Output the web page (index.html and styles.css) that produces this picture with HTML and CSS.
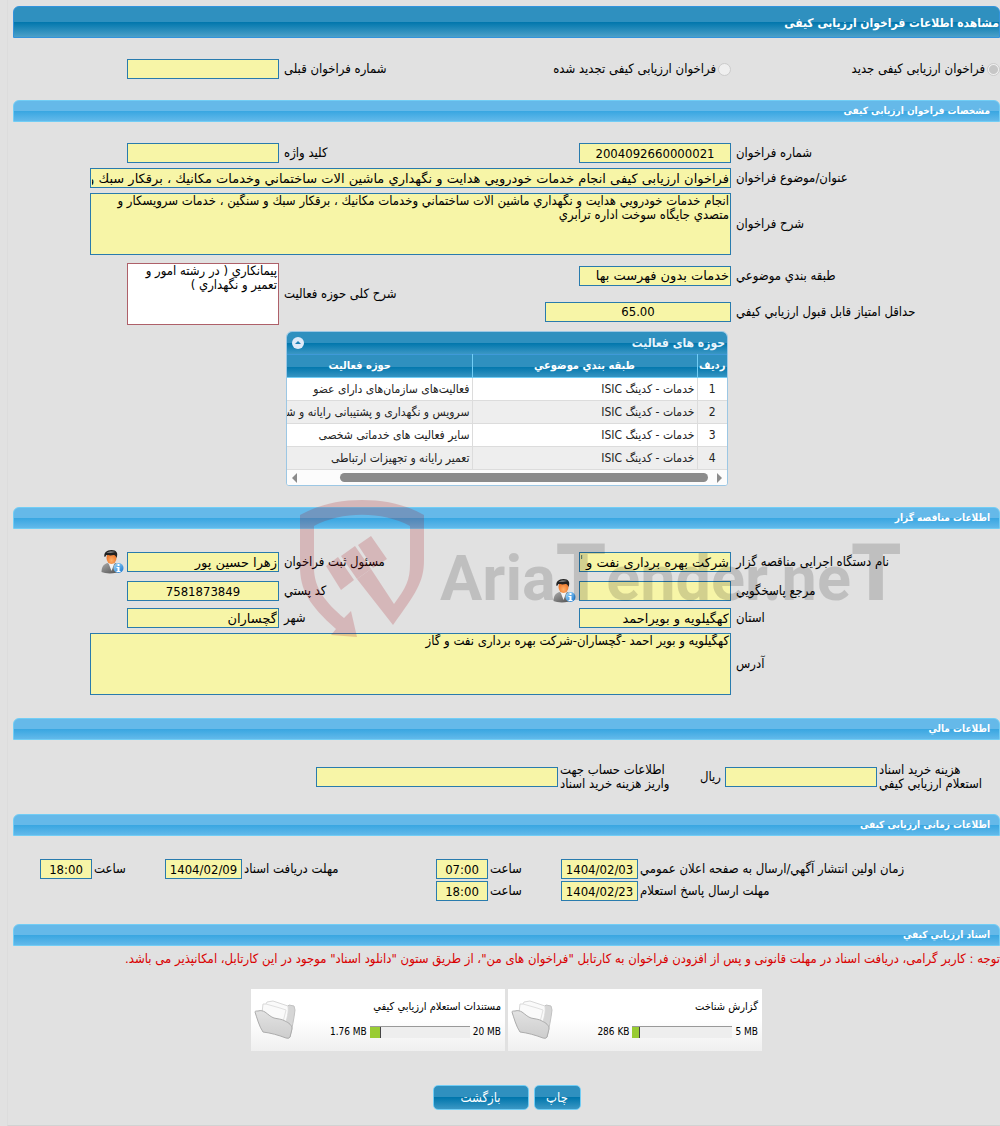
FILE: index.html
```html
<!DOCTYPE html>
<html lang="fa" dir="rtl">
<head>
<meta charset="utf-8">
<title>مشاهده اطلاعات فراخوان ارزیابی کیفی</title>
<link rel="stylesheet" href="styles.css">
</head>
<body>
<svg class="defs" width="0" height="0" aria-hidden="true">
  <defs>
    <linearGradient id="suit" x1="0" y1="0" x2="1" y2="1"><stop offset="0" stop-color="#aaa"/><stop offset="1" stop-color="#4a4a4a"/></linearGradient>
    <radialGradient id="face" cx=".5" cy=".7" r=".7"><stop offset="0" stop-color="#ffb067"/><stop offset="1" stop-color="#e8681c"/></radialGradient>
    <linearGradient id="badge" x1="0" y1="0" x2="1" y2="1"><stop offset="0" stop-color="#a5dcfb"/><stop offset="1" stop-color="#1273cf"/></linearGradient>
    <linearGradient id="flap" x1="0" y1="0" x2="0" y2="1"><stop offset="0" stop-color="#e2e2e2"/><stop offset="1" stop-color="#cdcdcd"/></linearGradient>
    <symbol id="person" viewBox="0 0 22 24">
      <path d="M0 22c0-5 2-8 6-9l4 2 4-2c3 1 5 4 5 8-4 3-15 3-19 1z" fill="url(#suit)"/>
      <path d="M7 13l3 8 3-8-3 1z" fill="#f4f4f4"/>
      <ellipse cx="10" cy="8" rx="5" ry="6" fill="url(#face)"/>
      <path d="M3 7c-1-4 2-7 7-7 5 0 7 3 5 8-1-3-2-3-3-3-3 1-6 0-7 0-1 1-1 2-2 2z" fill="#222"/>
      <path d="M5 3c2-2 6-2 9-1-3 1-6 1-9 1z" fill="#777"/>
      <circle cx="17" cy="18" r="5" fill="url(#badge)"/>
      <path d="M16 14h2v2h-2zM15 17h3v4h1v1h-4v-1h1v-3h-1z" fill="#fff"/>
    </symbol>
    <symbol id="folder" viewBox="0 0 42 40">
      <path d="M32 8l3-3 5 1 1 4c-1 9-3 18-5 27l-9-6z" fill="#d6d6d6" stroke="#c2c2c2"/>
      <path d="M8 13L9 4l3 0 1-2 6-1 15 5c1 6-1 13-3 19z" fill="#fafafa" stroke="#d8d8d8"/>
      <path d="M12 4l14 4 6 2-3 12" fill="none" stroke="#e0e0e0"/>
      <path d="M1 12c0-1 1-1 3-1 3-1 5 0 7 1 4 3 6 5 9 6 4 1 8 1 11 3 4 2 7 4 7 8l-2 8c-1 2-3 1-4 1-8-3-15-5-23-6C5 26 3 18 1 12z" fill="url(#flap)" stroke="#acacac"/>
    </symbol>
  </defs>
</svg>
<main class="page">
  <h1 class="bar bar-main">مشاهده اطلاعات فراخوان ارزیابی کیفی</h1>

  <div class="grid type-row">
    <label class="radio c-label"><input type="radio" name="kind" checked disabled>فراخوان ارزیابی کیفی جدید</label>
    <label class="radio c-renew"><input type="radio" name="kind" disabled>فراخوان ارزیابی کیفی تجدید شده</label>
    <label class="lbl c-label2" for="prev">شماره فراخوان قبلی</label>
    <input class="field c-field2" id="prev" readonly>
  </div>

  <section>
    <h2 class="bar">مشخصات فراخوان ارزیابی کیفی</h2>
    <div class="grid spec">
      <label class="lbl c-label" for="num">شماره فراخوان</label>
      <input class="field num c-field" id="num" value="2004092660000021" readonly>
      <label class="lbl c-label2" for="key">کلید واژه</label>
      <input class="field c-field2" id="key" readonly>

      <label class="lbl c-label" for="subject">عنوان/موضوع فراخوان</label>
      <input class="field c-wide" id="subject" value="فراخوان ارزیابی کیفی انجام خدمات خودرويي هدايت و نگهداري ماشين الات ساختماني وخدمات مكانيك ، برقكار سبك و سنگين ، خدمات سرويسكار و متصدي جايگاه سوخت اداره ترابري" readonly>

      <label class="lbl c-label" for="desc">شرح فراخوان</label>
      <textarea class="field area c-wide" id="desc" readonly>انجام خدمات خودرويي هدايت و نگهداري ماشين الات ساختماني وخدمات مكانيك ، برقكار سبك و سنگين ، خدمات سرويسكار و متصدي جايگاه سوخت اداره ترابري</textarea>

      <label class="lbl c-label tall" for="cat">طبقه بندي موضوعي</label>
      <input class="field c-field" id="cat" value="خدمات بدون فهرست بها" readonly>
      <label class="lbl c-label2 two-rows" for="scope">شرح کلی حوزه فعالیت</label>
      <textarea class="field area scope c-field2 two-rows" id="scope" readonly>پيمانكاري ( در رشته امور و تعمير و نگهداري )</textarea>

      <label class="lbl c-label tall" for="score">حداقل امتیاز قابل قبول ارزيابي کيفي</label>
      <input class="field num score" id="score" value="65.00" readonly>
    </div>

    <div class="activities">
      <div class="act-title"><span>حوزه های فعالیت</span>
        <button class="collapse" type="button" aria-label="بستن"><svg viewBox="0 0 12 12" width="12" height="12"><circle cx="6" cy="6" r="6" fill="#dfeaf8"/><path d="M3 7l3-3 3 3z" fill="#1c7fb3"/></svg></button>
      </div>
      <table>
        <colgroup><col class="col-idx"><col class="col-cat"><col class="col-act"></colgroup>
        <thead><tr><th>ردیف</th><th>طبقه بندي موضوعي</th><th>حوزه فعالیت</th></tr></thead>
        <tbody>
          <tr><td>1</td><td>خدمات - کدینگ ISIC</td><td>فعالیت‌های سازمان‌های دارای عضو</td></tr>
          <tr><td>2</td><td>خدمات - کدینگ ISIC</td><td>سرویس و نگهداری و پشتیبانی رایانه و شبکه</td></tr>
          <tr><td>3</td><td>خدمات - کدینگ ISIC</td><td>سایر فعالیت های خدماتی شخصی</td></tr>
          <tr><td>4</td><td>خدمات - کدینگ ISIC</td><td>تعمیر رایانه و تجهیزات ارتباطی</td></tr>
        </tbody>
      </table>
      <div class="scroll"><i class="arrow arrow-r"></i><i class="thumb"></i><i class="arrow arrow-l"></i></div>
    </div>
  </section>

  <section class="owner-section">
    <h2 class="bar">اطلاعات مناقصه گزار</h2>
    <div class="grid owner">
      <label class="lbl c-label tall-icon" for="org">نام دستگاه اجرایی مناقصه گزار</label>
      <input class="field c-field" id="org" value="شرکت بهره برداری نفت و گاز گچساران" readonly>
      <label class="lbl c-label2" for="resp">مسئول ثبت فراخوان</label>
      <input class="field c-field2" id="resp" value="زهرا حسین پور" readonly>
      <button class="person c-icon" type="button" aria-label="اطلاعات مسئول"><svg width="23" height="24"><use href="#person"/></svg></button>

      <label class="lbl c-label tall-icon" for="ref">مرجع پاسخگويي</label>
      <input class="field c-field" id="ref" readonly>
      <div class="c-label2 icon-label">
        <button class="person" type="button" aria-label="اطلاعات مرجع"><svg width="23" height="24"><use href="#person"/></svg></button>
        <label for="zip">کد پستي</label>
      </div>
      <input class="field num c-field2" id="zip" value="7581873849" readonly>

      <label class="lbl c-label" for="prov">استان</label>
      <input class="field c-field" id="prov" value="کهگیلویه و بویراحمد" readonly>
      <label class="lbl c-label2" for="city">شهر</label>
      <input class="field c-field2" id="city" value="گچساران" readonly>

      <label class="lbl c-label" for="addr">آدرس</label>
      <textarea class="field area c-wide" id="addr" readonly>کهگیلویه و بویر احمد -گچساران-شرکت بهره برداری نفت و گاز</textarea>
    </div>
    <div class="watermark" aria-hidden="true" dir="ltr">
      <svg class="shield" viewBox="300 499 126 139" width="126" height="139" fill="#a70914">
        <path d="M300 515C320 504 340 500 362 500S405 504 424 515V560C424 582 416 593 393 625L357 579 371 569 394 604C406 588 410 580 410 564V526C382 511 342 511 314 526V568C314 588 326 603 344 618L351 611 357 637 331 635 336 629C309 605 300 590 300 566Z"/>
        <path d="M341 556L355 546 371 569 357 579ZM358 545L371 536 387 559 373 568ZM326 566L338 557 354 580 341 590Z"/>
      </svg>
      <span class="brand">Aria<b>T</b>ender.ne<b>T</b></span>
    </div>
  </section>

  <section class="finance-section">
    <h2 class="bar">اطلاعات مالي</h2>
    <div class="finance">
      <label class="two-line" for="cost">هزينه خريد اسناد<br>استعلام ارزيابي کيفي</label>
      <input class="field" id="cost" readonly>
      <div class="between"><span>ریال</span><label class="two-line" for="acct">اطلاعات حساب جهت<br>واريز هزينه خريد اسناد</label></div>
      <input class="field" id="acct" readonly>
    </div>
  </section>

  <section>
    <h2 class="bar">اطلاعات زمانی ارزیابی کیفی</h2>
    <div class="times">
      <label class="lbl" for="d1">زمان اولين انتشار آگهي/ارسال به صفحه اعلان عمومي</label><input class="field num" id="d1" value="1404/02/03" readonly>
      <label class="lbl" for="h1">ساعت</label><input class="field num" id="h1" value="07:00" readonly>
      <label class="lbl" for="d2">مهلت دریافت اسناد</label><input class="field num" id="d2" value="1404/02/09" readonly>
      <label class="lbl" for="h2">ساعت</label><input class="field num" id="h2" value="18:00" readonly>
      <label class="lbl next-row" for="d3">مهلت ارسال پاسخ استعلام</label><input class="field num" id="d3" value="1404/02/23" readonly>
      <label class="lbl" for="h3">ساعت</label><input class="field num" id="h3" value="18:00" readonly>
    </div>
  </section>

  <section>
    <h2 class="bar">اسناد ارزيابي کيفي</h2>
    <p class="notice">توجه : کاربر گرامی، دریافت اسناد در مهلت قانونی و پس از افزودن فراخوان به کارتابل "فراخوان های من"، از طریق ستون "دانلود اسناد" موجود در این کارتابل، امکانپذیر می باشد.</p>
    <div class="docs">
      <article class="doc">
        <div class="doc-info"><h3>گزارش شناخت</h3>
          <div class="size"><span dir="ltr">5 MB</span><div class="meter"><i style="width:8%"></i></div><span dir="ltr">286 KB</span></div></div>
        <svg class="folder" width="42" height="40"><use href="#folder"/></svg>
      </article>
      <article class="doc">
        <div class="doc-info"><h3>مستندات استعلام ارزيابي کيفي</h3>
          <div class="size"><span dir="ltr">20 MB</span><div class="meter"><i style="width:11%"></i></div><span dir="ltr">1.76 MB</span></div></div>
        <svg class="folder" width="42" height="40"><use href="#folder"/></svg>
      </article>
    </div>
    <div class="actions">
      <button class="btn" type="button">چاپ</button>
      <button class="btn btn-back" type="button">بازگشت</button>
    </div>
  </section>
</main>
</body>
</html>
```
FILE: styles.css
```css
* { box-sizing: border-box; }
body {
  margin: 0;
  background: #e1e1e1;
  color: #000;
  font: 13px/14px "DejaVu Sans Condensed", "DejaVu Sans", Tahoma, sans-serif;
  overflow-x: hidden;
}
.defs { position: absolute; }
.page {
  margin-left: 7px;
  padding: 6px 0 15px 5px;
  border-left: 1px solid #dcdcdc;
  border-bottom: 1px solid #d2d2d2;
}
h1, h2, h3, p { margin: 0; }
input, textarea, button { font: inherit; color: inherit; margin: 0; }

.bar {
  height: 22px;
  padding: 0 9px;
  border: 1px solid #71cdf5;
  border-radius: 6px 6px 0 0;
  background: linear-gradient(#65b9e9 0 50%, #38a6e1 50%, #62b9ea);
  color: #fff;
  font-size: 10px;
  line-height: 20px;
  font-weight: bold;
}
.bar-main {
  height: 32px;
  padding: 0;
  border-color: #3293dc;
  background: linear-gradient(#2f90bf 0 50%, #0076ac 50%, #4ba0c9);
  font-size: 12px;
  line-height: 32px;
}

.grid {
  display: grid;
  grid-template-columns: minmax(0, 269fr) 152px minmax(0, 300fr) 152px 37px minmax(0, 77fr);
  row-gap: 5px;
  align-items: center;
}
.c-label { grid-column: 1; }
.c-field { grid-column: 2; }
.c-label2 { grid-column: 3; }
.c-field2 { grid-column: 4; }
.c-icon { grid-column: 5; }
.c-wide { grid-column: 2 / 6; }
.lbl { text-align: left; padding-left: 5px; }

.field {
  width: 100%;
  height: 20px;
  padding: 0 1px;
  border: 1px solid #297bad;
  border-radius: 0;
  background: #f7f5a7;
  font-family: "DejaVu Sans", Tahoma, sans-serif;
  outline: 0;
}
.num, .area { font-family: "DejaVu Sans Condensed", Tahoma, sans-serif; }
.num { direction: ltr; text-align: center; }
.area {
  display: block;
  height: 62px;
  resize: none;
  overflow: hidden;
}

.type-row { padding: 21px 0; }
.type-row > * { grid-row: 1; }
.radio { display: flex; align-items: center; gap: 2px; white-space: nowrap; }
.radio input {
  appearance: none;
  width: 13px;
  height: 13px;
  border: 1px solid #cbcbcb;
  border-radius: 50%;
  background: #efefef;
}
.radio input:checked { background: radial-gradient(circle, #c6c6c6 0 4px, #efefef 5px); }
.c-renew { grid-column: 2 / 4; }

.spec { padding-top: 21px; }
.tall { height: 31px; line-height: 31px; }
.two-rows { grid-row: 4 / 6; }
.score { grid-area: 5 / 2 / 6 / 4; width: 186px; }
.scope { background: #fff; border-color: #ae6069; }

.activities {
  width: 442px;
  margin: 4px 272px 0 0;
  border: 1px solid #9cc7e4;
  border-radius: 6px 6px 3px 3px;
  background: #fff;
  overflow: hidden;
}
.act-title, .activities thead tr { background: linear-gradient(#2f90bf 0 50%, #0076ac 50%, #3b97c4); }
.act-title {
  display: flex;
  justify-content: space-between;
  align-items: center;
  height: 22px;
  padding: 0 2px 0 5px;
  color: #e9f5fd;
  font-size: 12px;
  font-weight: bold;
}
.collapse { display: flex; padding: 0; border: 0; background: none; }
table { width: 480px; table-layout: fixed; border-collapse: collapse; font-size: 12px; }
.col-idx { width: 30px; }
.col-cat { width: 225px; }
th, td { height: 23px; padding: 0 2px; white-space: nowrap; border-left: 1px solid #dcdcdc; }
th { padding: 0; color: #fff; font-size: 11px; border-left-color: #71cdf5; border-top: 1px solid #3f99d8; border-bottom: 1px solid #71cdf5; }
td { color: #222; border-bottom: 1px solid #dcdcdc; text-align: right; }
td:first-child { text-align: center; }
tbody tr:nth-child(even) { background: #eee; }
.scroll { display: flex; align-items: center; gap: 9px; height: 15px; padding: 0 5px; background: #fcfcfc; }
.thumb { flex: 1; height: 9px; margin-left: 34px; border-radius: 5px; background: #8b8b8b; }
.arrow { border: 5px solid transparent; }
.arrow-r { border-left-color: #8b8b8b; border-right-width: 0; }
.arrow-l { border-right-color: #8b8b8b; border-left-width: 0; }

.owner-section { position: relative; margin-top: 21px; }
.owner { padding-top: 21px; }
.tall-icon { line-height: 24px; }
.person { display: flex; justify-self: start; padding: 0 3px 0 0; border: 0; background: none; }
.icon-label { display: flex; justify-content: space-between; align-items: center; padding-left: 5px; }
.watermark {
  position: absolute;
  left: 287px;
  top: -8px;
  display: flex;
  align-items: center;
  gap: 14px;
  pointer-events: none;
}
.shield { opacity: .19; }
.brand {
  padding-top: 14px;
  color: rgba(0, 0, 0, .15);
  font: bold 63px/80px Roboto, "Liberation Sans", sans-serif;
}
.brand b { font-size: 80px; }

.finance-section { margin-top: 23px; }
.finance {
  display: grid;
  grid-template-columns: minmax(0, 123fr) 152px minmax(0, 167fr) 242px minmax(0, 303fr);
  align-items: center;
  padding: 23px 0;
}
.two-line { justify-self: end; text-align: left; padding-left: 2px; }
.between { display: flex; justify-content: space-between; align-items: center; padding-right: 4px; }

.times {
  display: grid;
  grid-template-columns: minmax(0, 362fr) 77px minmax(0, 73fr) 52px minmax(0, 194fr) 77px minmax(0, 73fr) 52px minmax(0, 27fr);
  gap: 2px 0;
  align-items: center;
  padding: 23px 0;
}
.times .lbl { padding-left: 2px; }
.next-row { grid-column: 1; }

.notice { padding: 6px 0; color: #d90000; white-space: nowrap; }
.docs { display: flex; justify-content: center; gap: 3px; margin-top: 17px; }
.doc {
  display: flex;
  justify-content: space-between;
  width: 254px;
  height: 62px;
  padding: 11px 4px 0 3px;
  background: linear-gradient(#fff 50%, #efefef);
  font-size: 10px;
}
.doc h3 { font-size: 11px; font-weight: normal; line-height: 14px; }
.size { display: flex; align-items: center; gap: 3px; margin-top: 11px; }
.meter { width: 100px; height: 12px; border-top: 1px solid #999; background: #eee; direction: ltr; }
.meter i { display: block; height: 11px; background: #9c3; border-right: 1px solid #444; }

.actions { display: flex; justify-content: center; gap: 5px; margin-top: 34px; }
.btn {
  width: 47px;
  height: 25px;
  padding: 0;
  border: 1px solid #71cdf5;
  border-radius: 5px;
  background: linear-gradient(#2f90bf 0 50%, #0076ac 50%, #3b97c4);
  color: #fff;
}
.btn-back { width: 96px; }
```
